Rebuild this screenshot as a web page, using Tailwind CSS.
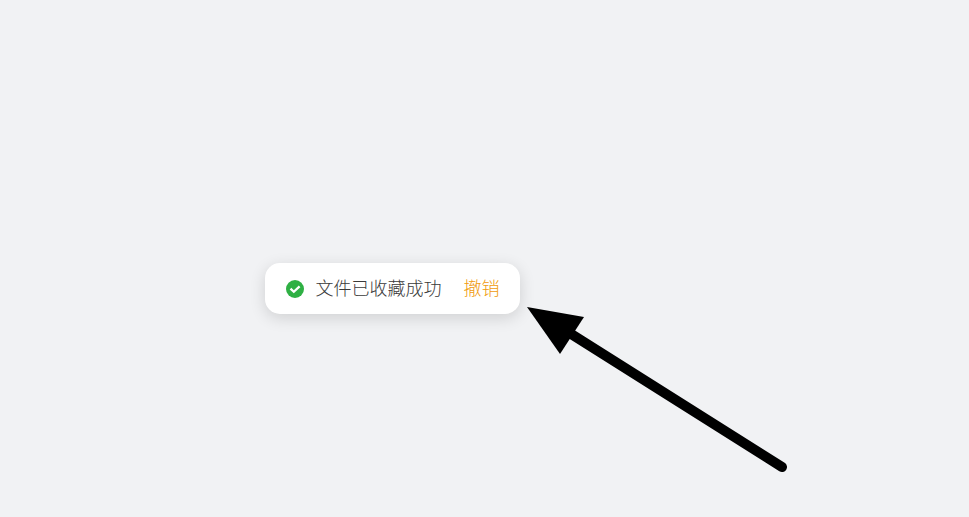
<!DOCTYPE html>
<html lang="zh-CN">

<head>
    <meta charset="UTF-8" />
    <meta name="viewport" content="width=device-width, initial-scale=1.0" />
    <title>文件已收藏成功</title>
    <script src="https://cdn.jsdelivr.net/npm/@tailwindcss/browser@4"></script>
</head>

<body class="bg-[#f1f2f4] font-['Noto_Sans_CJK_SC',sans-serif]">
    <main class="min-h-screen flex items-center justify-center overflow-hidden pt-15 pr-[185px]">
        <!-- Toast -->
        <div role="status"
            class="relative flex items-center h-[51px] pl-[21px] pr-5 bg-white rounded-[15px] shadow-[0_4px_16px_rgba(0,0,0,0.14)] text-lg leading-6 font-light whitespace-nowrap">
            <svg class="size-[18px] mr-3 shrink-0" viewBox="0 0 18 18" fill="none" aria-hidden="true">
                <circle cx="9" cy="9" r="9" fill="#2fb044" />
                <path d="M4.5 8.7l3.3 3.1 5.8-5.4" stroke="#fff" stroke-width="2.3" />
            </svg>
            <p class="pb-1 text-[#3a3a3a] mr-[22px]">文件已收藏成功</p>
            <button type="button" class="pb-1 text-[#f09a0c] hover:text-[#d88c10] cursor-pointer">撤销</button>

            <!-- Arrow -->
            <svg class="absolute left-full top-10 ml-1 w-[270px] h-[172px] max-w-none" viewBox="0 0 270 172" aria-hidden="true">
                <path d="M44 29L258 164" stroke="#000" stroke-width="10" stroke-linecap="round" />
                <path d="M3 4l57 10-24 37z" fill="#000" />
            </svg>
        </div>
    </main>
</body>

</html>
